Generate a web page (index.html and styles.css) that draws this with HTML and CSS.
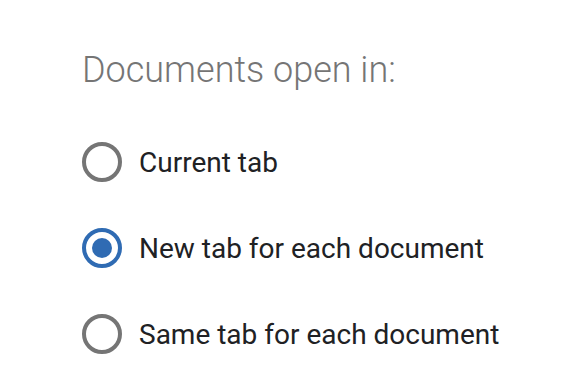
FILE: index.html
```html
<!DOCTYPE html>
<html>
<head>
<meta charset="utf-8">
<link rel="stylesheet" href="styles.css">
</head>
<body>
<div class="panel">
  <h1 class="title">Documents open in:</h1>
  <div class="options">
    <label class="option"><span class="radio"></span><span class="label">Current tab</span></label>
    <label class="option"><span class="radio checked"></span><span class="label">New tab for each document</span></label>
    <label class="option"><span class="radio"></span><span class="label">Same tab for each document</span></label>
  </div>
</div>
</body>
</html>
```
FILE: styles.css
```css
html, body {
  margin: 0;
  padding: 0;
  background: #ffffff;
}
.panel {
  padding: 48px 0 0 82px;
  font-family: Roboto, "Noto Sans", sans-serif;
}
.title {
  margin: 0;
  font-weight: 300;
  font-size: 36px;
  line-height: 44px;
  color: #757575;
}
.options {
  display: flex;
  flex-direction: column;
  gap: 46px;
  margin-top: 50px;
}
.option {
  display: flex;
  align-items: center;
  gap: 17px;
  height: 40px;
}
.radio {
  box-sizing: border-box;
  width: 40px;
  height: 40px;
  border: 4px solid #757575;
  border-radius: 50%;
  display: flex;
  align-items: center;
  justify-content: center;
}
.radio.checked {
  border-color: #2f6bb3;
}
.radio.checked::after {
  content: "";
  width: 20px;
  height: 20px;
  border-radius: 50%;
  background: #2f6bb3;
}
.label {
  font-size: 28px;
  color: #202124;
}
```
